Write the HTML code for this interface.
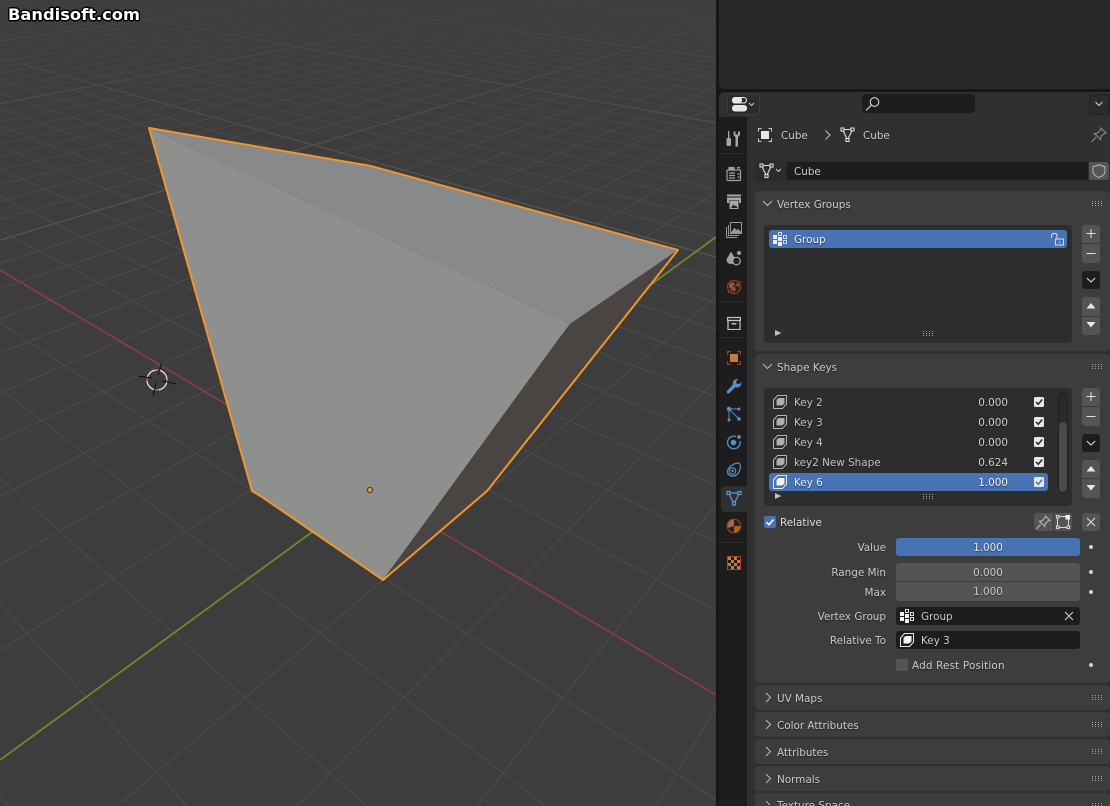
<!DOCTYPE html>
<html><head><meta charset="utf-8"><title>Blender</title>
<style>
html,body{margin:0;padding:0;background:#161616;overflow:hidden;width:1110px;height:806px}
#r{position:relative;width:1110px;height:806px;overflow:hidden;background:#161616;font-family:"DejaVu Sans","Liberation Sans",sans-serif;font-size:10.4px;color:#cccccc}
#r div,#r svg{position:absolute}
.t{position:absolute;white-space:nowrap;line-height:14px;height:14px;margin-top:2px;text-shadow:0 1px 1px rgba(0,0,0,.55)}
.ra{text-align:right}
.c{text-align:center}
.p{background:#3d3d3d;border-radius:4px;left:755px;width:355px}
.b{background:#545454;border-radius:3px}
.f{background:#1d1d1d;border-radius:3px}
</style></head><body><div id="r">
<svg id="vp" style="left:0;top:0;overflow:hidden" width="716" height="806" viewBox="0 0 716 806">
<defs><linearGradient id="fd" x1="0" y1="0" x2="0" y2="1"><stop offset="0" stop-color="#3d3d3d" stop-opacity=".85"/><stop offset=".45" stop-color="#3d3d3d" stop-opacity=".35"/><stop offset="1" stop-color="#3d3d3d" stop-opacity="0"/></linearGradient>
<clipPath id="cl"><rect width="716" height="806"/></clipPath></defs>
<g clip-path="url(#cl)">
<rect width="716" height="806" fill="#3d3d3d"/>
<g id="grid" fill="none"></g>
<rect width="716" height="260" fill="url(#fd)"/>
<line x1="0" y1="270" x2="716" y2="695" stroke="#8a3b45" stroke-width="1.8"/>
<line x1="0" y1="760" x2="716" y2="237" stroke="#6a8c2b" stroke-width="1.8"/>
<polygon points="149,128 371,166 678,250 570,324" fill="#88898b"/>
<polygon points="149,128 570,324 383,580 252,491" fill="#8e908e"/>
<polygon points="678,250 570,324 560,337 383,580 487,491" fill="#4a4543"/>
<polygon points="149,128 371,166 678,250 487,491 383,580 262,497 252,491" fill="none" stroke="#f2952b" stroke-width="2" stroke-linejoin="round"/>
<circle cx="370" cy="490" r="2.6" fill="#f2952b" stroke="#3a3a3a" stroke-width="1"/>
<circle cx="157" cy="380" r="10" fill="none" stroke="#eeeeee" stroke-width="1.2"/>
<circle cx="157" cy="380" r="10" fill="none" stroke="#c8512f" stroke-width="1.2" stroke-dasharray="4 12" stroke-dashoffset="2"/>
<g stroke="#0c0c0c" stroke-width="1"><line x1="161.700" y1="363" x2="158" y2="375"/><line x1="156" y1="383" x2="153" y2="396"/><line x1="138" y1="376" x2="152" y2="378"/><line x1="162" y1="381" x2="176" y2="384"/></g>
</g></svg>
<div class="t" style="left:8px;top:5px;margin:0;height:20px;font:bold 16.3px/20px 'DejaVu Sans',sans-serif;color:#fff;text-shadow:-1.5px 0 0 #000,1.5px 0 0 #000,0 -1.5px 0 #000,0 1.5px 0 #000,-1px -1px 0 #000,1px 1px 0 #000,-1px 1px 0 #000,1px -1px 0 #000">Bandisoft.com</div>

<div style="left:719px;top:0;width:391px;height:89px;background:#292929;border-bottom-left-radius:5px"></div>
<div style="left:719px;top:92px;width:391px;height:714px;background:#303030;border-top-left-radius:5px"></div>
<div style="left:719px;top:117px;width:28px;height:689px;background:#1d1d1d"></div>

<!-- header -->
<div style="left:727px;top:94px;width:31px;height:19px;background:#2b2b2b;border:1px solid #3c3c3c;border-radius:4px"></div>
<svg style="left:731px;top:97px" width="24" height="15"><rect x="1.500" y="0.500" width="14" height="5.500" rx="2.700" fill="none" stroke="#e6e6e6"/><rect x="1" y="0" width="10" height="6.500" rx="3" fill="#e6e6e6"/><rect x="1" y="8" width="15" height="6.500" rx="3" fill="#e6e6e6"/><path d="M18 6l2.500 2.500L23 6" fill="none" stroke="#c8c8c8" stroke-width="1"/></svg>
<div class="f" style="left:862px;top:94px;width:113px;height:19px;border-radius:4px"></div>
<svg style="left:865px;top:96px" width="16" height="16" fill="none" stroke="#d8d8d8" stroke-width="1.100"><circle cx="9.500" cy="6" r="4.300"/><path d="M6.300 9.200L1 14.500"/></svg>
<div style="left:1089px;top:94px;width:19px;height:19px;background:#2b2b2b;border:1px solid #1f1f1f;border-radius:4px"></div>
<svg style="left:1094px;top:101px" width="10" height="6" fill="none" stroke="#d0d0d0"><path d="M1.500 1L5 4.500 8.500 1"/></svg>

<!-- tabs -->
<div style="left:721px;top:486px;width:26px;height:26px;background:#303030;border-radius:5px 0 0 5px"></div>
<div style="left:719px;top:153px;width:28px;height:1px;background:#2b2b2b"></div>
<div style="left:719px;top:301px;width:28px;height:1px;background:#2b2b2b"></div>
<div style="left:719px;top:337px;width:28px;height:1px;background:#2b2b2b"></div>
<div style="left:719px;top:542px;width:28px;height:1px;background:#2b2b2b"></div>
<svg style="left:725px;top:130px" width="18" height="18" fill="#a8a8a8"><rect x="3" y="1" width="1.300" height="7"/><rect x="1.500" y="8" width="4.500" height="8" rx="1.500"/><path d="M9 1.500h1.500v3h2.500v-3H14.500c1 1 1 4-1.500 5.500v9.500h-2.500V7C8.500 6 8 3 9 1.500z"/></svg>
<svg style="left:726px;top:166px" width="16" height="16" fill="none" stroke="#a0a0a0" stroke-width="1.200"><rect x="1" y="4" width="13.500" height="10.500" rx="1"/><rect x="3" y="1.500" width="5" height="2.500" fill="#a0a0a0"/><rect x="11" y="1" width="3" height="1.500" fill="#a0a0a0" stroke="none"/><path d="M3 7h6M3 9.500h6M3 12h6M11.500 8h2M11.500 11h2" stroke-width="1.300"/></svg>
<svg style="left:726px;top:194px" width="16" height="16"><rect x="1" y="0.500" width="14" height="2" fill="#a8a8a8"/><path d="M1 3.500h14v5.500h-2v-3H3v3H1z" fill="#a8a8a8"/><rect x="3.500" y="6.500" width="9" height="8.500" fill="#a8a8a8"/><path d="M5 14l2.500-3.500 1.500 2 1-1 1.500 2.500z" fill="#1d1d1d"/></svg>
<svg style="left:726px;top:222px" width="16" height="16" fill="none" stroke="#989898"><rect x="4.500" y="0.500" width="11" height="11" fill="#1d1d1d"/><path d="M5.500 10.500l3-4 2 2.500 1.500-1.500 3 3z" fill="#989898"/><path d="M2.500 3v10.500H13M0.500 5v10.500H11"/></svg>
<svg style="left:726px;top:250px" width="16" height="16"><path d="M5 1.500L9 8.500c1.500 3-1 5.500-4 5.500S-.5 11.500 1 8.500z" fill="#a0a0a0"/><circle cx="13" cy="3" r="2" fill="#a0a0a0"/><circle cx="10.500" cy="11" r="3.800" fill="#1d1d1d" stroke="#a8a8a8" stroke-width="1.200"/></svg>
<svg style="left:726px;top:279px" width="16" height="16"><circle cx="8" cy="8" r="6.500" fill="#262020" stroke="#8a3c36" stroke-width="1.200"/><path d="M3 5l4-2 2 2-2 2 3 3-2 3-3-3-2-2z" fill="#9a5a2a"/><path d="M10 4l3 1 0 3-2-1z" fill="#9a5a2a"/><path d="M2 14L15 2" stroke="#8a3c36"/></svg>
<svg style="left:727px;top:316px" width="14" height="14" fill="none" stroke="#c4c4c4" stroke-width="1.200"><rect x="0.600" y="1.500" width="12.800" height="3"/><rect x="1" y="4.500" width="12" height="9"/><rect x="4.500" y="7" width="5" height="1.500" fill="#c4c4c4" stroke="none"/></svg>
<svg style="left:727px;top:351px" width="14" height="14" fill="none" stroke="#9c3a3a" stroke-width="1.200"><path d="M0.600 4V.6H4M10 .6h3.400V4M13.400 10v3.400H10M4 13.400H.6V10"/><rect x="3" y="3" width="8" height="8" fill="#c47c38" stroke="none"/></svg>
<svg style="left:726px;top:378px" width="16" height="16"><path d="M1 13l6-6.500C6 3.500 8.500 .5 12.500 1L10 3.500l.7 2.200 2.300.6L15.300 4c.5 4-2.700 6.300-6 5.300L3 15.500c-1.300.8-3-1-2-2.500z" fill="#5890c8"/></svg>
<svg style="left:726px;top:406px" width="16" height="16" stroke="#5890c8" stroke-width="1" fill="#5890c8"><path d="M3 3L13 3M3 3V14M3 3L13 13" fill="none"/><circle cx="3" cy="3" r="2.300" stroke="none"/><circle cx="13" cy="3" r="1.500" stroke="none"/><circle cx="3" cy="14" r="1.500" stroke="none"/><circle cx="13" cy="13" r="1.800" stroke="none"/></svg>
<svg style="left:726px;top:434px" width="16" height="16"><path d="M10 2.500A6.300 6.300 0 1 0 14 7" fill="none" stroke="#5890c8" stroke-width="1.300"/><circle cx="7.500" cy="8.500" r="2.800" fill="#5890c8"/><circle cx="13" cy="3" r="1.900" fill="#5890c8"/></svg>
<svg style="left:726px;top:462px" width="16" height="16" fill="none" stroke="#5890c8" stroke-width="1.200"><path d="M1.500 9C2.500 4 9 .8 13 1.200 15.500 3 14.500 9 11 12.500 7.500 15.500 1 14 1.500 9z"/><circle cx="6.500" cy="9" r="3.200"/><circle cx="6.500" cy="9" r="1.200" fill="#5890c8" stroke="none"/></svg>
<svg style="left:726px;top:490px" width="16" height="16" fill="none" stroke="#5a9ad6" stroke-width="1.200"><path d="M2.500 3h11L8 13.500z"/><g fill="#303030"><rect x="1" y="1.500" width="3" height="3"/><rect x="12" y="1.500" width="3" height="3"/><rect x="6.500" y="12" width="3" height="3"/></g></svg>
<svg style="left:726px;top:518px" width="16" height="16"><circle cx="8" cy="8" r="6.800" fill="#262020" stroke="#9a3e38" stroke-width="1.100"/><path d="M8 1.500A6.500 6.500 0 0 0 2 10L8 8z" fill="#a86a44"/><path d="M8 8l6.300 0A6.400 6.400 0 0 1 8 14.500z" fill="#a8602a"/></svg>
<svg style="left:727px;top:556px" width="14" height="14"><rect x=".5" y=".5" width="13" height="13" fill="#1f1a18" stroke="#a8443c"/><path fill="#c47c38" d="M1 1h3v3H1zM7 1h3v3H7zM4 4h3v3H4zM10 4h3v3h-3zM1 7h3v3H1zM7 7h3v3H7zM4 10h3v3H4zM10 10h3v3h-3z"/></svg>

<!-- breadcrumb -->
<svg style="left:758px;top:128px" width="14" height="14" fill="none" stroke="#c8c8c8"><path d="M.5 3.500V.5h3M10.500.5h3v3M13.500 10.500v3h-3M3.500 13.500h-3v-3"/><rect x="3" y="3" width="8" height="8" fill="#e8e8e8" stroke="none"/></svg>
<div class="t" style="left:781px;top:127px">Cube</div>
<svg style="left:824px;top:130px" width="8" height="10" fill="none" stroke="#c0c0c0"><path d="M1.500 .5L6 5 1.500 9.500"/></svg>
<svg style="left:840px;top:127px" width="15" height="15" fill="none" stroke="#dcdcdc" stroke-width="1.100"><path d="M2.500 2.500h10L7.500 13z"/><g fill="#303030"><rect x="1" y="1" width="3" height="3"/><rect x="11" y="1" width="3" height="3"/><rect x="6" y="11.500" width="3" height="3"/></g></svg>
<div class="t" style="left:863px;top:127px">Cube</div>
<svg style="left:1091px;top:127px" width="16" height="16" fill="none" stroke="#8c8c8c" stroke-width="1.100"><path d="M10 1l5 5-2 .5-3 3-.5 3-6-6 3-.5 3-3zM5 10l-4.500 5"/></svg>

<!-- data row -->
<div style="left:755px;top:161px;width:354px;height:20px;background:#2b2b2b;border-radius:4px"></div>
<div class="f" style="left:787px;top:162px;width:301px;height:18px;border-radius:0"></div>
<div style="left:1089px;top:162px;width:20px;height:18px;background:#545454;border-radius:0 3px 3px 0"></div>
<svg style="left:759px;top:163px" width="26" height="16" fill="none" stroke="#dcdcdc" stroke-width="1.100"><path d="M2.500 2.500h10L7.500 13z"/><g fill="#2b2b2b"><rect x="1" y="1" width="3" height="3"/><rect x="11" y="1" width="3" height="3"/><rect x="6" y="11.500" width="3" height="3"/></g><path d="M17 6l2.500 2.500L22 6" stroke="#c8c8c8"/></svg>
<div class="t" style="left:794px;top:163px">Cube</div>
<svg style="left:1092px;top:164px" width="14" height="14" fill="none" stroke="#b4b4b4" stroke-width="1.100"><path d="M7 .8l6 2v4.500C13 10.500 10 12.500 7 13.500 4 12.500 1 10.500 1 7.300V2.800z"/></svg>

<!-- Vertex Groups -->
<div class="p" style="top:191px;height:160px"></div>
<svg style="left:762px;top:200px" width="11" height="7" fill="none" stroke="#bcbcbc"><path d="M1 1l4.500 4.500L10 1"/></svg>
<div class="t" style="left:777px;top:196px">Vertex Groups</div>
<svg style="left:1092px;top:201px" width="11" height="6"><use href="#grip"/></svg>
<div style="left:764px;top:225px;width:308px;height:118px;background:#2d2d2d;border-radius:4px"></div>
<div style="left:769px;top:230px;width:298px;height:18px;background:#4772b3;border-radius:3px"></div>
<svg style="left:773px;top:232px" width="14" height="14"><use href="#vg"/></svg>
<div class="t" style="left:794px;top:231px;color:#f0f0f0">Group</div>
<svg style="left:1050px;top:232px" width="15" height="14" fill="none" stroke="#e0e0e0"><path d="M1.500 6V4a2.800 2.800 0 0 1 5.500-.5V7"/><rect x="5.500" y="7" width="8" height="6"/><rect x="9" y="9.500" width="1.200" height="1.200" fill="#e0e0e0" stroke="none"/></svg>
<div class="b" style="left:1082px;top:225px;width:18px;height:38px"></div>
<div style="left:1082px;top:243px;width:18px;height:1px;background:#3a3a3a"></div>
<svg style="left:1085px;top:227px" width="12" height="34" stroke="#e4e4e4" fill="none"><path d="M6 2v9M1.500 6.500h9M1.500 26.500h9"/></svg>
<div class="f" style="left:1082px;top:271px;width:18px;height:18px"></div>
<svg style="left:1086px;top:277px" width="10" height="6" fill="none" stroke="#e0e0e0"><path d="M.8 1L5 5 9.200 1"/></svg>
<div class="b" style="left:1082px;top:297px;width:18px;height:38px"></div>
<div style="left:1082px;top:316px;width:18px;height:1px;background:#3a3a3a"></div>
<svg style="left:1085px;top:303px" width="12" height="26" fill="#e8e8e8"><path d="M6 0l4.500 5.500h-9zM1.500 19h9L6 24.500z"/></svg>
<svg style="left:775px;top:330px" width="7" height="6" fill="#c0c0c0"><path d="M0 0l6.500 3L0 6z"/></svg>
<svg style="left:923px;top:331px" width="11" height="6"><use href="#grip"/></svg>

<!-- Shape Keys -->
<div class="p" style="top:354px;height:329px"></div>
<svg style="left:762px;top:363px" width="11" height="7" fill="none" stroke="#bcbcbc"><path d="M1 1l4.500 4.500L10 1"/></svg>
<div class="t" style="left:777px;top:359px">Shape Keys</div>
<svg style="left:1092px;top:364px" width="11" height="6"><use href="#grip"/></svg>
<div style="left:764px;top:388px;width:308px;height:118px;background:#2d2d2d;border-radius:4px"></div>
<div style="left:769px;top:473px;width:279px;height:18px;background:#4772b3;border-radius:3px"></div>
<div style="left:1058px;top:392px;width:10px;height:101px;background:#2a2a2a;border:1px solid #1f1f1f;border-radius:5px;box-sizing:border-box"></div>
<div style="left:1059px;top:422px;width:8px;height:70px;background:#4a4a4a;border-radius:4px"></div>

<svg style="left:773px;top:395px" width="14" height="14"><use href="#sk"/></svg>
<div class="t" style="left:794px;top:394px;color:#c4c4c4">Key 2</div>
<div class="t ra" style="left:950px;width:58px;top:394px;color:#cecece">0.000</div>
<svg style="left:773px;top:415px" width="14" height="14"><use href="#sk"/></svg>
<div class="t" style="left:794px;top:414px;color:#c4c4c4">Key 3</div>
<div class="t ra" style="left:950px;width:58px;top:414px;color:#cecece">0.000</div>
<svg style="left:773px;top:435px" width="14" height="14"><use href="#sk"/></svg>
<div class="t" style="left:794px;top:434px;color:#c4c4c4">Key 4</div>
<div class="t ra" style="left:950px;width:58px;top:434px;color:#cecece">0.000</div>
<svg style="left:773px;top:455px" width="14" height="14"><use href="#sk"/></svg>
<div class="t" style="left:794px;top:454px;color:#c4c4c4">key2 New Shape</div>
<div class="t ra" style="left:950px;width:58px;top:454px;color:#cecece">0.624</div>
<svg style="left:773px;top:475px" width="14" height="14"><use href="#skw"/></svg>
<div class="t" style="left:794px;top:474px;color:#f4f4f4">Key 6</div>
<div class="t ra" style="left:950px;width:58px;top:474px;color:#f4f4f4">1.000</div>

<svg style="left:1034px;top:397px" width="10" height="10"><use href="#cb"/></svg>
<svg style="left:1034px;top:417px" width="10" height="10"><use href="#cb"/></svg>
<svg style="left:1034px;top:437px" width="10" height="10"><use href="#cb"/></svg>
<svg style="left:1034px;top:457px" width="10" height="10"><use href="#cb"/></svg>
<svg style="left:1034px;top:477px" width="10" height="10"><rect width="10" height="10" rx="1.500" fill="#e8e8e8"/><path d="M2 5l2.200 2.300L8.200 2.500" fill="none" stroke="#4772b3" stroke-width="1.500"/></svg>
<svg style="left:775px;top:493px" width="7" height="6" fill="#c0c0c0"><path d="M0 0l6.500 3L0 6z"/></svg>
<svg style="left:923px;top:494px" width="11" height="6"><use href="#grip"/></svg>

<div class="b" style="left:1082px;top:388px;width:18px;height:38px"></div>
<div style="left:1082px;top:406px;width:18px;height:1px;background:#3a3a3a"></div>
<svg style="left:1085px;top:390px" width="12" height="34" stroke="#e4e4e4" fill="none"><path d="M6 2v9M1.500 6.500h9M1.500 26.500h9"/></svg>
<div class="f" style="left:1082px;top:434px;width:18px;height:18px"></div>
<svg style="left:1086px;top:440px" width="10" height="6" fill="none" stroke="#e0e0e0"><path d="M.8 1L5 5 9.200 1"/></svg>
<div class="b" style="left:1082px;top:460px;width:18px;height:38px"></div>
<div style="left:1082px;top:478px;width:18px;height:1px;background:#3a3a3a"></div>
<svg style="left:1085px;top:466px" width="12" height="26" fill="#e8e8e8"><path d="M6 0l4.500 5.500h-9zM1.500 19h9L6 24.500z"/></svg>

<div style="left:764px;top:516px;width:12px;height:12px;background:#4772b3;border-radius:2px"></div>
<svg style="left:764px;top:516px" width="12" height="12" fill="none" stroke="#fff" stroke-width="1.600"><path d="M2.500 6.200l2.500 2.500 4.500-5.200"/></svg>
<div class="t" style="left:780px;top:514px;color:#e0e0e0">Relative</div>
<div class="b" style="left:1034px;top:513px;width:38px;height:18px"></div>
<div style="left:1053px;top:513px;width:1px;height:18px;background:#3a3a3a"></div>
<svg style="left:1036px;top:515px" width="15" height="15" fill="none" stroke="#b8b8b8" stroke-width="1.100"><path d="M9.500 1l4.500 4.500-2 .5-2.800 2.800-.4 2.700-5.300-5.300 2.700-.4L8.800 3zM4.500 9.500L.5 14"/></svg>
<svg style="left:1056px;top:515px" width="14" height="14" fill="none" stroke="#d8d8d8"><path d="M3 1.500h8M1.500 3v8M12.500 3v8M3 12.500h8"/><rect x="0.500" y="0.500" width="2.500" height="2.500"/><rect x="0.500" y="11" width="2.500" height="2.500"/><rect x="11" y="11" width="2.500" height="2.500"/><rect x="9.500" y="0" width="4.500" height="4.500" fill="#f0f0f0" stroke="none"/></svg>
<div class="b" style="left:1082px;top:513px;width:18px;height:18px"></div>
<svg style="left:1086px;top:517px" width="10" height="10" fill="none" stroke="#e0e0e0"><path d="M1 1l8 8M9 1L1 9"/></svg>

<div class="t ra" style="left:786px;width:100px;top:539px">Value</div>
<div style="left:896px;top:538px;width:184px;height:18px;background:#4772b3;border-radius:3px"></div>
<div class="t c" style="left:896px;width:184px;top:539px;color:#e8e8e8">1.000</div>
<div class="t ra" style="left:786px;width:100px;top:564px">Range Min</div>
<div style="left:896px;top:563px;width:184px;height:38px;background:#545454;border-radius:3px"></div>
<div style="left:896px;top:581px;width:184px;height:1px;background:#3d3d3d"></div>
<div class="t c" style="left:896px;width:184px;top:564px">0.000</div>
<div class="t ra" style="left:786px;width:100px;top:584px">Max</div>
<div class="t c" style="left:896px;width:184px;top:583px">1.000</div>
<svg style="left:1088px;top:544px" width="6" height="6"><circle cx="3" cy="3" r="2" fill="#d0d0d0"/></svg>
<svg style="left:1088px;top:569px" width="6" height="6"><circle cx="3" cy="3" r="2" fill="#d0d0d0"/></svg>
<svg style="left:1088px;top:589px" width="6" height="6"><circle cx="3" cy="3" r="2" fill="#d0d0d0"/></svg>

<div class="t ra" style="left:786px;width:100px;top:608px">Vertex Group</div>
<div class="f" style="left:896px;top:607px;width:184px;height:18px"></div>
<svg style="left:900px;top:609px" width="14" height="14"><use href="#vg"/></svg>
<div class="t" style="left:921px;top:608px">Group</div>
<svg style="left:1064px;top:611px" width="10" height="10" fill="none" stroke="#d0d0d0"><path d="M1 1l8 8M9 1L1 9"/></svg>
<div class="t ra" style="left:786px;width:100px;top:632px">Relative To</div>
<div class="f" style="left:896px;top:631px;width:184px;height:18px"></div>
<svg style="left:900px;top:633px" width="14" height="14"><use href="#skw"/></svg>
<div class="t" style="left:921px;top:632px">Key 3</div>
<div style="left:896px;top:659px;width:12px;height:12px;background:#545454;border-radius:2px"></div>
<div class="t" style="left:912px;top:657px;letter-spacing:.17px">Add Rest Position</div>
<svg style="left:1088px;top:662px" width="6" height="6"><circle cx="3" cy="3" r="2" fill="#d0d0d0"/></svg>

<!-- collapsed -->
<div class="p" style="top:685px;height:25px"></div>
<svg style="left:765px;top:692px" width="7" height="11" fill="none" stroke="#bcbcbc"><path d="M1 1l4.500 4.500L1 10"/></svg>
<div class="t" style="left:777px;top:690px">UV Maps</div>
<svg style="left:1092px;top:695px" width="11" height="6"><use href="#grip"/></svg>
<div class="p" style="top:712px;height:25px"></div>
<svg style="left:765px;top:719px" width="7" height="11" fill="none" stroke="#bcbcbc"><path d="M1 1l4.500 4.500L1 10"/></svg>
<div class="t" style="left:777px;top:717px">Color Attributes</div>
<svg style="left:1092px;top:722px" width="11" height="6"><use href="#grip"/></svg>
<div class="p" style="top:739px;height:25px"></div>
<svg style="left:765px;top:746px" width="7" height="11" fill="none" stroke="#bcbcbc"><path d="M1 1l4.500 4.500L1 10"/></svg>
<div class="t" style="left:777px;top:744px">Attributes</div>
<svg style="left:1092px;top:749px" width="11" height="6"><use href="#grip"/></svg>
<div class="p" style="top:766px;height:25px"></div>
<svg style="left:765px;top:773px" width="7" height="11" fill="none" stroke="#bcbcbc"><path d="M1 1l4.500 4.500L1 10"/></svg>
<div class="t" style="left:777px;top:771px">Normals</div>
<svg style="left:1092px;top:776px" width="11" height="6"><use href="#grip"/></svg>
<div class="p" style="top:793px;height:13px;border-radius:4px 4px 0 0"></div>
<svg style="left:765px;top:800px" width="7" height="6" fill="none" stroke="#bcbcbc"><path d="M1 1l4 4"/></svg>
<div class="t" style="left:777px;top:797px;height:7px;overflow:hidden">Texture Space</div>
<svg style="left:1092px;top:803px" width="11" height="3"><path fill="#a8a8a8" d="M0 0h1v1H0zM3 0h1v1H3zM6 0h1v1H6zM9 0h1v1H9zM0 2h1v1H0zM3 2h1v1H3zM6 2h1v1H6zM9 2h1v1H9z"/></svg>

<svg width="0" height="0" style="left:0;top:0">
<defs>
<symbol id="grip" viewBox="0 0 11 6" width="11" height="6"><path fill="#a8a8a8" d="M0 0h1v1H0zM3 0h1v1H3zM6 0h1v1H6zM9 0h1v1H9zM0 2h1v1H0zM3 2h1v1H3zM6 2h1v1H6zM9 2h1v1H9zM0 4h1v1H0zM3 4h1v1H3zM6 4h1v1H6zM9 4h1v1H9z"/></symbol>
<symbol id="vg" viewBox="0 0 14 14" width="14" height="14"><path fill="#f0f0f0" d="M0 3h4v4H0zM0 8h4v4H0zM5 5h4v4H5zM5 10h4v4H5z"/><g fill="none" stroke="#d8d8d8"><rect x="5.500" y=".5" width="3" height="3"/><rect x="10.500" y="3.500" width="3" height="3"/><rect x="10.500" y="8.500" width="3" height="3"/></g></symbol>
<symbol id="sk" viewBox="0 0 14 14" width="14" height="14"><path d="M.5 5L4.500.5h9V9l-4 4.500H.5z" fill="none" stroke="#b4b4b4"/><path d="M3.500 5L5.500 3H11.500V8.500L9 10.500H3.500z" fill="#b0b0b0"/></symbol>
<symbol id="skw" viewBox="0 0 14 14" width="14" height="14"><path d="M.5 5L4.500.5h9V9l-4 4.500H.5z" fill="none" stroke="#e8e8e8"/><path d="M3.500 5L5.500 3H11.500V8.500L9 10.500H3.500z" fill="#f4f4f4"/></symbol>
<symbol id="cb" viewBox="0 0 10 10" width="10" height="10"><rect width="10" height="10" rx="1.500" fill="#e8e8e8"/><path d="M2 5l2.200 2.300L8.200 2.500" fill="none" stroke="#222" stroke-width="1.500"/></symbol>
</defs></svg>
</div>
<script>
(function(){
var O=[370,490],Vx=[-680,-131],Vy=[1217,-129],k=.0627,s='';
function P(u,v){var a=k*u,b=k*v,d=1+a+b;return [(O[0]+a*Vx[0]+b*Vy[0])/d,(O[1]+a*Vx[1]+b*Vy[1])/d];}
function clip(a,b){
var t0=0,t1=1,dx=b[0]-a[0],dy=b[1]-a[1],p=[-dx,dx,-dy,dy],q=[a[0],716-a[0],a[1],806-a[1]];
for(var i=0;i<4;i++){if(p[i]===0){if(q[i]<0)return null;continue;}var r=q[i]/p[i];if(p[i]<0){if(r>t1)return null;if(r>t0)t0=r;}else{if(r<t0)return null;if(r<t1)t1=r;}}
return [a[0]+t0*dx,a[1]+t0*dy,a[0]+t1*dx,a[1]+t1*dy];}
function L(V,Q,m){var e=[Q[0]+(Q[0]-V[0])*20,Q[1]+(Q[1]-V[1])*20],c=clip(V,e);if(!c)return;
s+='<line x1="'+c[0].toFixed(1)+'" y1="'+c[1].toFixed(1)+'" x2="'+c[2].toFixed(1)+'" y2="'+c[3].toFixed(1)+'" stroke="'+(m?'#5a5a5a':'#4c4c4c')+'" stroke-width="'+(m?1.2:1)+'"/>';}
for(var n=-15;n<=130;n++){if(n===0)continue;L(Vy,P(n,0),n%10===0);L(Vx,P(0,n),n%10===0);}
document.getElementById('grid').innerHTML=s;
})();
</script>
</body></html>
